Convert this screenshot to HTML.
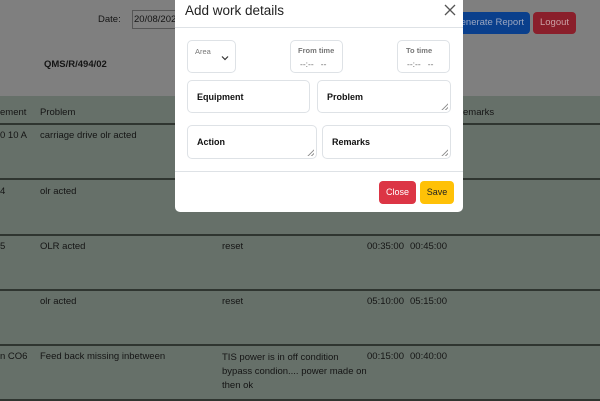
<!DOCTYPE html>
<html><head><style>
*{box-sizing:border-box;margin:0;padding:0}
body{width:600px;height:400px;overflow:hidden;position:relative;font-family:"Liberation Sans",sans-serif;background:#7f7f7f;color:#151515}
.t{position:absolute;font-size:9.5px;white-space:nowrap}
.tbl{position:absolute;left:0;top:96px;width:600px;height:304px;background:#667069}
.ln{position:absolute;left:0;width:600px;height:1.5px;background:#2f3530}
.modal{position:absolute;left:175px;top:0;width:288px;height:212px;background:#fff;border-radius:0 0 5px 5px}
.hd{position:absolute;left:0;top:0;width:288px;height:28px;border-bottom:1px solid #dee2e6}
.hd span{position:absolute;left:10px;top:3px;font-size:13.5px;color:#222}
.ft{position:absolute;left:0;top:171px;width:288px;border-top:1px solid #dee2e6}
.f{position:absolute;border:1px solid #dee2e6;border-radius:5px;background:#fff}
.f b{position:absolute;left:9px;top:11px;font-size:9px;color:#111}
.lab{position:absolute;font-size:7.5px;color:#777;font-weight:bold;white-space:nowrap}
.rs{position:absolute;right:2px;bottom:2px;width:8px;height:8px;background:repeating-linear-gradient(135deg,transparent 0 1.5px,#999 1.5px 2.5px);clip-path:polygon(100% 0,100% 100%,0 100%)}
.btn{position:absolute;border-radius:4px;font-size:9px;text-align:center;line-height:22px;white-space:nowrap;overflow:hidden}
</style></head><body>
<div class="t" style="left:98px;top:14px">Date:</div>
<div style="position:absolute;left:132px;top:10px;width:50px;height:19px;border:1px solid #555;background:#808080"></div>
<div class="t" style="left:134px;top:14px">20/08/202</div>
<div class="btn" style="left:450px;top:12px;width:80px;height:22px;background:#0a3f8c;color:#9aa6c0;font-size:9.5px;text-align:right;padding-right:6px">Generate Report</div>
<div class="btn" style="left:533px;top:12px;width:43px;height:22px;background:#8a1f2b;color:#c9a0a4;font-size:9.5px">Logout</div>
<div class="t" style="left:44px;top:59px;font-weight:bold">QMS/R/494/02</div>
<div class="tbl"></div>
<div class="ln" style="top:123px"></div><div class="ln" style="top:178px"></div><div class="ln" style="top:234px"></div><div class="ln" style="top:289px"></div><div class="ln" style="top:344px"></div><div class="ln" style="top:399px"></div>
<div class="t" style="left:0;top:107px">ement</div><div class="t" style="left:40px;top:107px">Problem</div><div class="t" style="left:463px;top:107px">emarks</div>
<div class="t" style="left:0;top:130px">0 10 A</div><div class="t" style="left:40px;top:130px">carriage drive olr acted</div>
<div class="t" style="left:0;top:186px">4</div><div class="t" style="left:40px;top:186px">olr acted</div>
<div class="t" style="left:0;top:241px">5</div><div class="t" style="left:40px;top:241px">OLR acted</div><div class="t" style="left:222px;top:241px">reset</div><div class="t" style="left:367px;top:241px">00:35:00</div><div class="t" style="left:410px;top:241px">00:45:00</div>
<div class="t" style="left:40px;top:296px">olr acted</div><div class="t" style="left:222px;top:296px">reset</div><div class="t" style="left:367px;top:296px">05:10:00</div><div class="t" style="left:410px;top:296px">05:15:00</div>
<div class="t" style="left:0;top:351px">n CO6</div><div class="t" style="left:40px;top:351px">Feed back missing inbetween</div>
<div class="t" style="left:222px;top:351px;line-height:14px">TIS power is in off condition<br>bypass condion.... power made on<br>then ok</div>
<div class="t" style="left:367px;top:351px">00:15:00</div><div class="t" style="left:410px;top:351px">00:40:00</div>
<div class="modal">
<div class="hd"><span>Add work details</span>
<svg style="position:absolute;left:269px;top:4px" width="12" height="12" viewBox="0 0 12 12"><path d="M1 1L11 11M11 1L1 11" stroke="#555" stroke-width="1.3"/></svg></div>
<div class="f" style="left:12px;top:40px;width:49px;height:33px"><span class="lab" style="left:7px;top:6px;font-weight:normal">Area</span>
<svg style="position:absolute;left:33px;top:14px" width="8" height="6" viewBox="0 0 8 6"><path d="M1 1.5L4 4.5L7 1.5" stroke="#333" stroke-width="1.2" fill="none"/></svg></div>
<div class="f" style="left:115px;top:40px;width:53px;height:33px"><span class="lab" style="left:7px;top:5px">From time</span><span class="lab" style="left:9px;top:18px;font-weight:normal;color:#666;font-size:8.5px">--:--&nbsp;&nbsp; --</span></div>
<div class="f" style="left:222px;top:40px;width:53px;height:33px"><span class="lab" style="left:8px;top:5px">To time</span><span class="lab" style="left:9px;top:18px;font-weight:normal;color:#666;font-size:8.5px">--:--&nbsp;&nbsp; --</span></div>
<div class="f" style="left:12px;top:80px;width:123px;height:33px"><b>Equipment</b></div>
<div class="f" style="left:142px;top:80px;width:134px;height:33px"><b>Problem</b><div class="rs"></div></div>
<div class="f" style="left:12px;top:125px;width:130px;height:34px"><b>Action</b><div class="rs"></div></div>
<div class="f" style="left:147px;top:125px;width:129px;height:34px"><b>Remarks</b><div class="rs"></div></div>
<div class="ft"></div>
<div class="btn" style="left:204px;top:181px;width:37px;height:23px;background:#dc3545;color:#fff">Close</div>
<div class="btn" style="left:245px;top:181px;width:34px;height:23px;background:#ffc107;color:#222">Save</div>
</div>
</body></html>
